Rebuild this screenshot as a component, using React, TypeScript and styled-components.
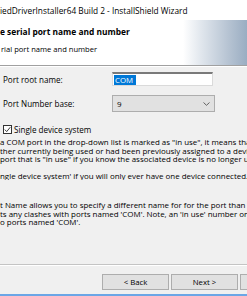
import styled, { createGlobalStyle } from "styled-components";

const GlobalStyle = createGlobalStyle`
  html, body {
    margin: 0;
    padding: 0;
    background: #f0f0f0;
  }
  body {
    font-family: "Open Sans", "Noto Sans", sans-serif;
    color: #000;
  }
`;

const Window = styled.div`
  width: 247px;
  height: 296px;
  display: flex;
  flex-direction: column;
  overflow: hidden;
  background: #f0f0f0;
  box-sizing: border-box;
  border-bottom: 2px solid #6ba6e6;
`;

const TitleBar = styled.div`
  height: 20px;
  display: flex;
  align-items: center;
  background: #fff;
  font-size: 8.3px;
  white-space: nowrap;
  color: #000;
`;

const Header = styled.div`
  height: 45px;
  display: flex;
  background: #fff;
  border-bottom: 1px solid #a0a0a0;
  box-shadow: 0 1px 0 #fff;
`;

const HeaderText = styled.div`
  flex: 1;
  display: flex;
  flex-direction: column;
  padding-top: 6px;
  gap: 6px;
  white-space: nowrap;
  overflow: hidden;
`;

const HeaderTitle = styled.div`
  font-size: 8.4px;
  font-weight: 700;
  line-height: 12px;
`;

const HeaderSub = styled.div`
  font-size: 7.6px;
  line-height: 10px;
  padding-left: 1px;
`;

const Banner = styled.div`
  width: 64px;
  background: linear-gradient(to right, #ffffff 0%, #dfe5ec 30%, #b7c4d3 70%, #9aadc2 100%);
`;

const Body = styled.div`
  flex: 1;
  display: flex;
  flex-direction: column;
  padding-top: 6px;
`;

const FieldRow = styled.div<{ $h: number; $mb: number }>`
  display: flex;
  align-items: center;
  height: ${(p) => p.$h}px;
  margin-bottom: ${(p) => p.$mb}px;
  padding-left: 3px;
`;

const Label = styled.div`
  width: 109px;
  font-size: 8.1px;
  white-space: nowrap;
`;

const TextBox = styled.div`
  width: 101px;
  height: 14px;
  box-sizing: border-box;
  background: #fff;
  border: 1px solid #dadada;
  border-top: 2px solid #7a7a7a;
  display: flex;
  align-items: center;
  padding-left: 1px;
`;

const Selected = styled.span`
  background: #0078d7;
  color: #fff;
  font-size: 7.8px;
  line-height: 10px;
  padding: 0 3px 0 1px;
`;

const DropDown = styled.div`
  width: 103px;
  height: 17px;
  box-sizing: border-box;
  background: #e1e1e1;
  border: 1px solid #adadad;
  display: flex;
  align-items: center;
  justify-content: space-between;
  padding: 0 4px 0 4px;
  font-size: 8px;
`;

const CheckRow = styled.label`
  display: flex;
  align-items: center;
  gap: 2px;
  padding-left: 3px;
  height: 11px;
  font-size: 8.1px;
  margin-bottom: 3px;
  white-space: nowrap;
`;

const CheckBox = styled.span`
  width: 9px;
  height: 9px;
  box-sizing: border-box;
  border: 1px solid #333;
  background: #fff;
  display: flex;
  align-items: center;
  justify-content: center;
`;

const Para = styled.div<{ $mb: number }>`
  font-size: 7.95px;
  line-height: 8.5px;
  white-space: nowrap;
  overflow: hidden;
  margin-bottom: ${(p) => p.$mb}px;
`;

const Footer = styled.div`
  border-top: 1px solid #c4c4c4;
  box-shadow: inset 0 1px 0 #fff;
  height: 30px;
  display: flex;
  gap: 2px;
  padding: 9px 0 0 102px;
  box-sizing: border-box;
`;

const Button = styled.div`
  flex: none;
  width: 67px;
  height: 16px;
  box-sizing: border-box;
  background: #e1e1e1;
  border: 1px solid #adadad;
  display: flex;
  align-items: center;
  justify-content: center;
  font-size: 7.8px;
`;

const paragraphs: { lines: string[]; mb: number }[] = [
  {
    lines: [
      'a COM port in the drop-down list is marked as "in use", it means that the port is',
      "ther currently being used or had been previously assigned to a device that",
      'port that is "in use" if you know the associated device is no longer used.',
    ],
    mb: 8,
  },
  {
    lines: ["ngle device system' if you will only ever have one device connected."],
    mb: 21,
  },
  {
    lines: [
      "t Name allows you to specify a different name for for the port than 'COM'",
      "ts any clashes with ports named 'COM'. Note, an 'in use' number only",
      "o ports named 'COM'.",
    ],
    mb: 0,
  },
];

export default function App() {
  return (
    <>
      <GlobalStyle />
      <Window>
        <TitleBar>iedDriverInstaller64 Build 2 - InstallShield Wizard</TitleBar>
        <Header>
          <HeaderText>
            <HeaderTitle>e serial port name and number</HeaderTitle>
            <HeaderSub>rial port name and number</HeaderSub>
          </HeaderText>
          <Banner />
        </Header>
        <Body>
          <FieldRow $h={14} $mb={9}>
            <Label>Port root name:</Label>
            <TextBox>
              <Selected>COM</Selected>
            </TextBox>
          </FieldRow>
          <FieldRow $h={17} $mb={12}>
            <Label>Port Number base:</Label>
            <DropDown>
              <span>9</span>
              <svg width="7" height="4" viewBox="0 0 7 4">
                <path d="M0.5 0.5 L3.5 3.3 L6.5 0.5" fill="none" stroke="#555" strokeWidth="0.9" />
              </svg>
            </DropDown>
          </FieldRow>
          <CheckRow>
            <CheckBox>
              <svg width="7" height="7" viewBox="0 0 7 7">
                <path d="M0.8 3.6 L2.7 5.6 L6.3 1.2" fill="none" stroke="#222" strokeWidth="0.9" />
              </svg>
            </CheckBox>
            Single device system
          </CheckRow>
          {paragraphs.map((p, i) => (
            <Para key={i} $mb={p.mb}>
              {p.lines.map((l, j) => (
                <div key={j}>{l}</div>
              ))}
            </Para>
          ))}
        </Body>
        <Footer>
          <Button>&lt; Back</Button>
          <Button>Next &gt;</Button>
          <Button>Cancel</Button>
        </Footer>
      </Window>
    </>
  );
}
